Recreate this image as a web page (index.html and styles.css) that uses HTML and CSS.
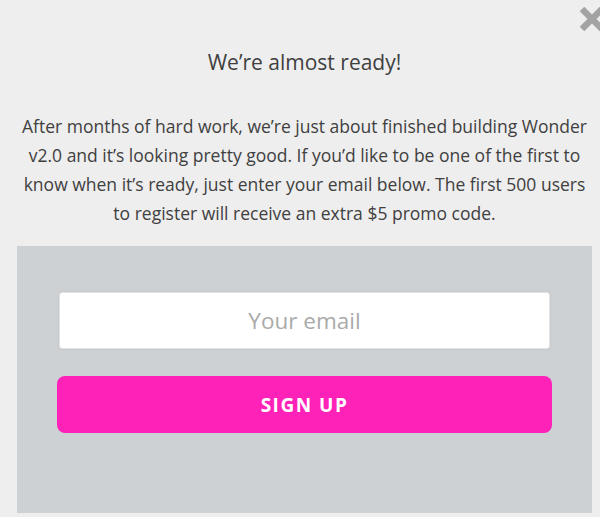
FILE: index.html
```html
<!DOCTYPE html>
<html>
<head lang="en">
    <meta charset="UTF-8">
    <title>Wonder v2.0</title>
    <link rel="stylesheet" href="styles.css">
</head>
<body>

<div class="modal">
    <a class="close" href="#" title="Close">
        <svg width="26" height="26" viewBox="0 0 26 26">
            <path d="M3 3 L23 23 M23 3 L3 23" stroke="#a3a3a3" stroke-width="6.5"/>
        </svg>
    </a>

    <h1 class="title">We’re almost ready!</h1>
    <p class="intro">After months of hard work, we’re just about finished building Wonder v2.0 and it’s looking pretty good. If you’d like to be one of the first to know when it’s ready, just enter your email below. The first 500 users to register will receive an extra $5 promo code.</p>

    <form class="signup" onsubmit="return false">
        <input class="email" type="text" name="email" placeholder="Your email">
        <button class="submit" type="submit">SIGN UP</button>
    </form>
</div>

</body>
</html>
```

FILE: styles.css
```css
*{
    margin: 0px;
    padding: 0px;
    box-sizing: border-box;
}
body{
    background-color: #eeeeee;
    font-family: "Open Sans", "Liberation Sans", sans-serif;
    color: #404040;
}
.modal{
    position: relative;
    padding: 48px 8px 0px 17px;
}
.close{
    position: absolute;
    top: 6px;
    right: -5px;
    display: block;
    width: 26px;
    height: 26px;
}
.close svg{
    display: block;
}
.title{
    font-size: 21px;
    font-weight: normal;
    line-height: 28px;
    text-align: center;
}
.intro{
    margin-top: 36px;
    font-size: 17.5px;
    line-height: 29px;
    text-align: center;
}
.signup{
    display: flex;
    flex-direction: column;
    gap: 27px;
    margin-top: 18px;
    padding: 46px 40px 80px 40px;
    background-color: #cdd1d4;
}
.email{
    margin: 0px 2px;
    height: 57px;
    border: 1px solid #e4e4e4;
    border-radius: 3px;
    background-color: #ffffff;
    box-shadow: 0px 0px 2px rgba(0, 0, 0, 0.12);
    font-family: inherit;
    font-size: 22.5px;
    color: #444444;
    text-align: center;
    outline: none;
}
.email::placeholder{
    color: #aaaaaa;
}
.submit{
    height: 57px;
    border: none;
    border-radius: 8px;
    background-color: #ff22b9;
    color: #ffffff;
    font-family: inherit;
    font-size: 19px;
    font-weight: bold;
    letter-spacing: 1.5px;
}
```
